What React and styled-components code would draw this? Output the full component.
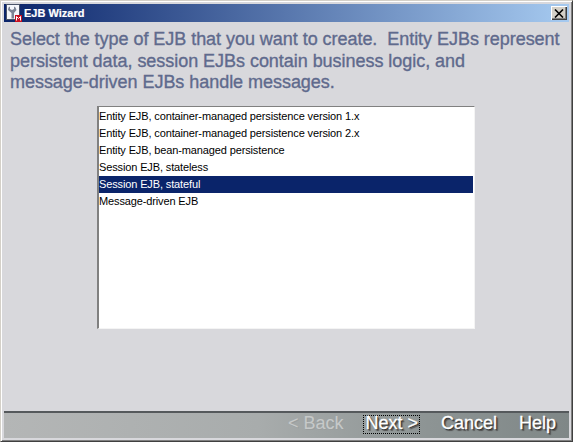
import React from "react";
import styled, { createGlobalStyle } from "styled-components";

const Global = createGlobalStyle`
  html, body { margin: 0; padding: 0; background: #d8d8dc; }
  body { font-family: "Liberation Sans", Arial, sans-serif; }
`;

const Frame = styled.div`
  width: 573px;
  height: 442px;
  box-sizing: border-box;
  display: flex;
  flex-direction: column;
  background: #d8d8dc;
  padding: 3px;
  border-top: 1px solid #d4d0c8;
  border-left: 1px solid #d4d0c8;
  border-right: 1px solid #404040;
  border-bottom: 1px solid #404040;
  box-shadow: inset 1px 1px 0 #fff, inset -1px -1px 0 #808080;
`;

const TitleBar = styled.div`
  height: 18px;
  flex: none;
  display: flex;
  align-items: center;
  padding: 0 2px 0 1px;
  background: linear-gradient(90deg, #0a246a 0%, #a6caf0 100%);
`;

const TitleText = styled.span`
  margin-left: 1px;
  color: #fff;
  font: bold 11px "Liberation Sans", Arial, sans-serif;
  -webkit-text-stroke: 0.2px #fff;
`;

const CloseButton = styled.button`
  margin-left: auto;
  width: 16px;
  height: 14px;
  padding: 0;
  display: flex;
  align-items: center;
  justify-content: center;
  background: #d4d0c8;
  border: none;
  box-shadow: inset 1px 1px 0 #fff, inset -1px -1px 0 #404040, inset -2px -2px 0 #808080;
`;

const Content = styled.div`
  flex: 1;
  display: flex;
  flex-direction: column;
  min-height: 0;
`;

const Prompt = styled.p`
  margin: 7px 0 0 6px;
  width: 560px;
  color: #5f6a8d;
  font-size: 18px;
  line-height: 21.5px;
  letter-spacing: -0.04px;
  -webkit-text-stroke: 0.35px #5f6a8d;
  white-space: pre;
`;

const ListBox = styled.ul`
  list-style: none;
  margin: 12px 0 0 93px;
  padding: 1px 1px 0 0;
  width: 378px;
  height: 223px;
  box-sizing: border-box;
  background: #fff;
  border-top: 1px solid #808080;
  border-left: 2px solid #808080;
  border-right: 1px solid #f4f4f4;
  border-bottom: 1px solid #f4f4f4;
`;

const ListRow = styled.li`
  height: 17px;
  line-height: 17px;
  width: 374px;
  font-size: 11px;
  letter-spacing: -0.13px;
  white-space: nowrap;
  color: ${(p) => (p.$selected ? "#fff" : "#000")};
  background: ${(p) => (p.$selected ? "#0a246a" : "transparent")};
`;

const ButtonBar = styled.div`
  margin-top: auto;
  height: 27px;
  flex: none;
  display: flex;
  align-items: flex-start;
  justify-content: flex-end;
  padding: 2px 11px 0 0;
  box-sizing: border-box;
  border-top: 2px solid #55595c;
  background: linear-gradient(90deg, #b4b6b6 0%, #a8acac 45%, #8d9494 75%, #7f8787 100%);
`;

const BarButton = styled.button`
  height: 19px;
  padding: 0 1px 2px;
  margin: 0 ${(p) => p.$gap || 0}px 0 0;
  background: none;
  box-sizing: border-box;
  border: 1px dotted ${(p) => (p.$focused ? "#000" : "transparent")};
  font: 18px "Liberation Sans", Arial, sans-serif;
  line-height: 15px;
  color: ${(p) => (p.$disabled ? "#c6c9c9" : "#fff")};
  -webkit-text-stroke: ${(p) => (p.$disabled ? "0" : "0.3px #fff")};
  text-shadow: ${(p) => (p.$disabled ? "1px 1px 0 #9a9e9e" : "1px 1px 1px #2a2a2a, 2px 2px 1px #555")};
`;

const rows = [
  "Entity EJB, container-managed persistence version 1.x",
  "Entity EJB, container-managed persistence version 2.x",
  "Entity EJB, bean-managed persistence",
  "Session EJB, stateless",
  "Session EJB, stateful",
  "Message-driven EJB",
];

function WizardIcon() {
  return (
    <svg width="18" height="18" viewBox="0 0 18 18">
      <rect x="1.5" y="0.5" width="13" height="15" fill="#f4f6fa" stroke="#4a5468" />
      <path d="M3.5 3.5l1.5-1v2.5l2 1 2-1V2.5l1.5 1 1 2.5-2.5 3v5.5H6.5V9L3 6z" fill="#7c8494" />
      <rect x="10" y="11" width="7" height="7" fill="#c81020" />
      <path d="M11.5 16.5v-4l2 2 2-2v4" fill="none" stroke="#fff" />
    </svg>
  );
}

export default function App() {
  return (
    <>
      <Global />
      <Frame>
        <TitleBar>
          <WizardIcon />
          <TitleText>EJB Wizard</TitleText>
          <CloseButton aria-label="Close">
            <svg width="10" height="9" viewBox="0 0 10 9">
              <path d="M1 0.5l8 8M9 0.5l-8 8" stroke="#000" strokeWidth="1.6" />
            </svg>
          </CloseButton>
        </TitleBar>
        <Content>
          <Prompt>
            {"Select the type of EJB that you want to create.  Entity EJBs represent\npersistent data, session EJBs contain business logic, and\nmessage-driven EJBs handle messages."}
          </Prompt>
          <ListBox>
            {rows.map((r) => (
              <ListRow key={r} $selected={r === "Session EJB, stateful"}>
                {r}
              </ListRow>
            ))}
          </ListBox>
          <ButtonBar>
            <BarButton $disabled $gap={18}>&lt; Back</BarButton>
            <BarButton $focused $gap={19}>Next &gt;</BarButton>
            <BarButton $gap={18}>Cancel</BarButton>
            <BarButton>Help</BarButton>
          </ButtonBar>
        </Content>
      </Frame>
    </>
  );
}
